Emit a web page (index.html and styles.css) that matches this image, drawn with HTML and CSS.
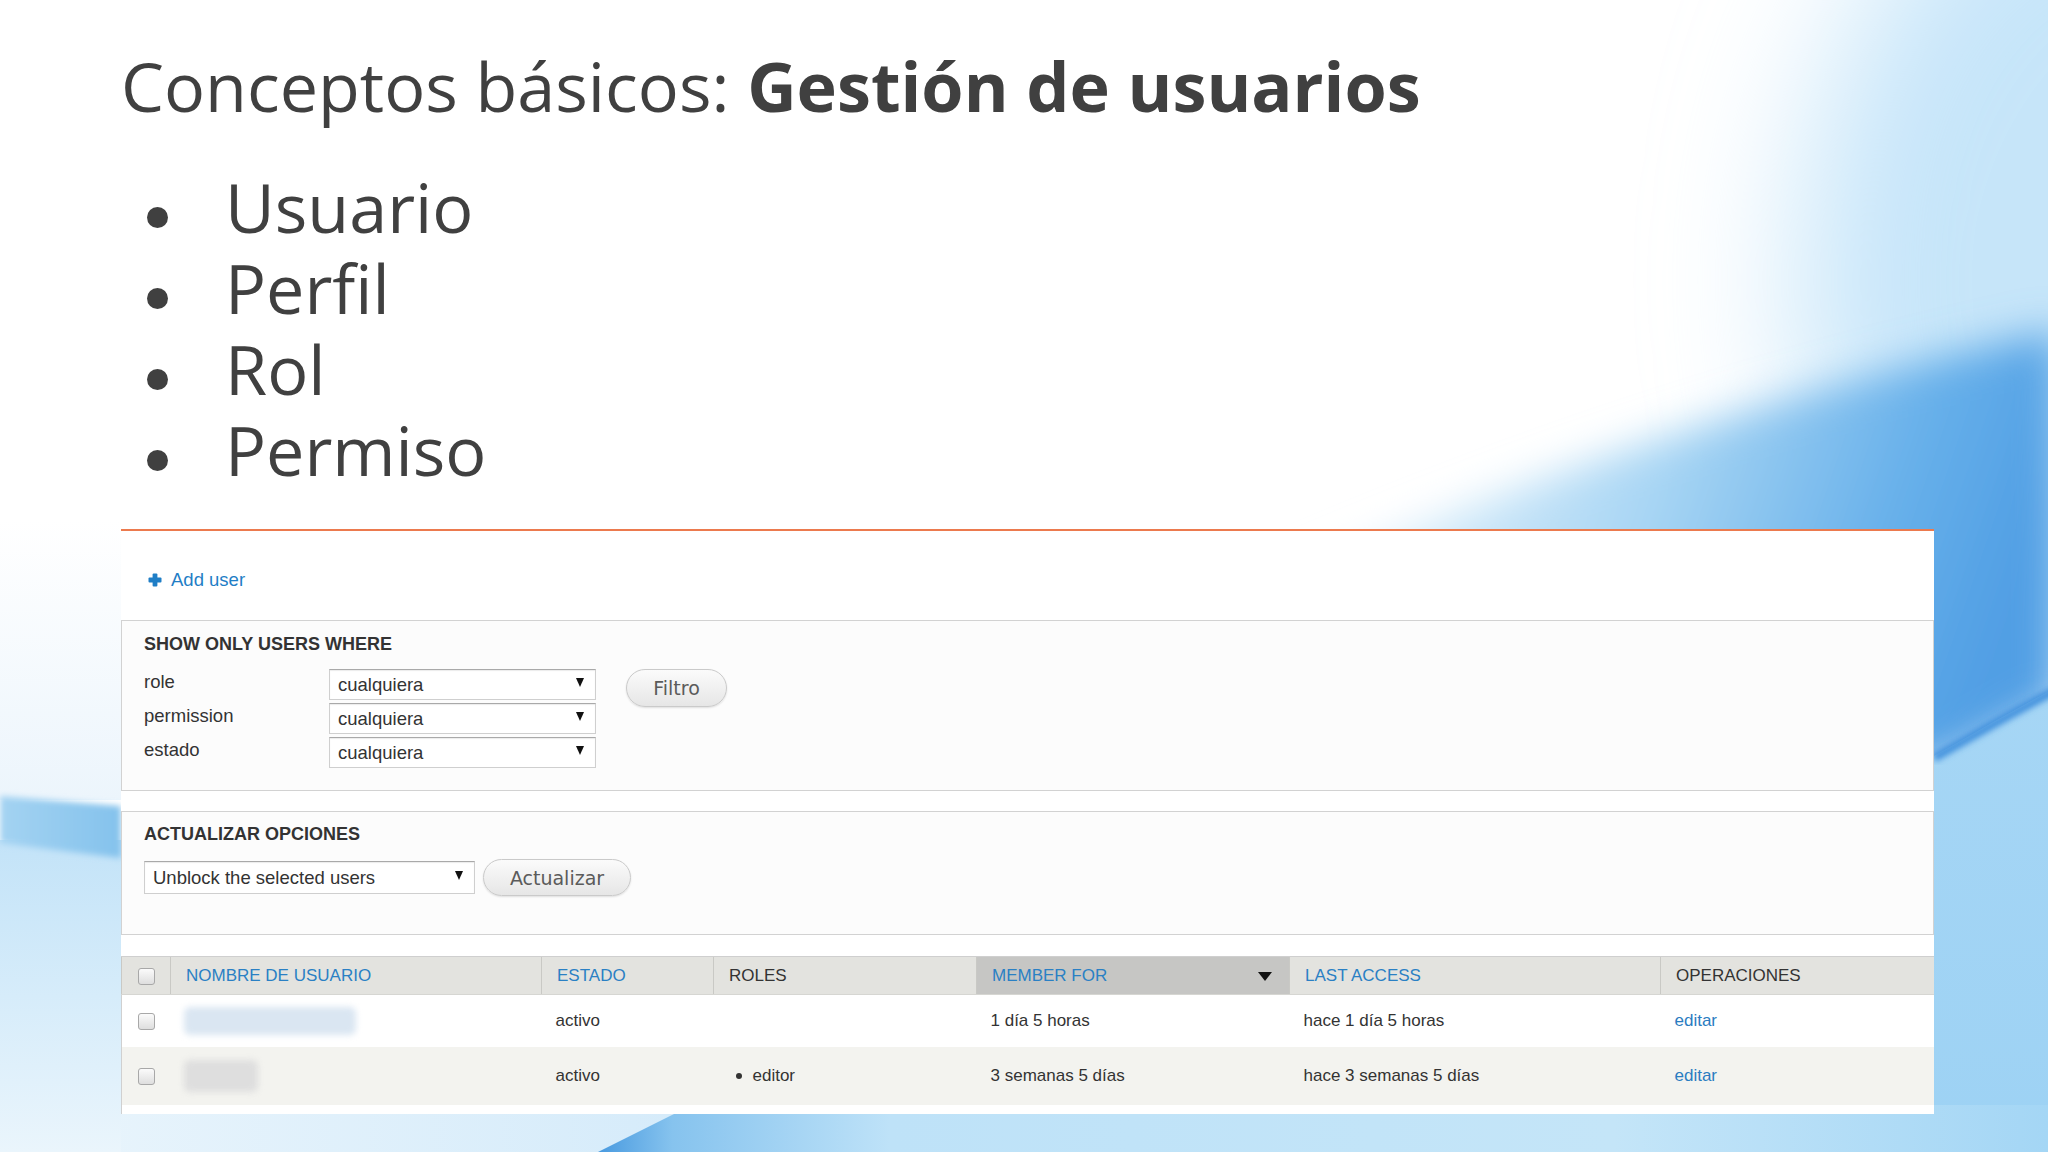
FILE: index.html
```html
<!DOCTYPE html>
<html lang="es">
<head>
    <meta charset="UTF-8">
    <meta name="viewport" content="width=device-width, initial-scale=1.0">
    <title>Conceptos básicos: Gestión de usuarios</title>
    <link rel="stylesheet" href="styles.css">
</head>
<body>
    <div class="slide">
        <svg class="backdrop" viewBox="0 0 2048 1152" preserveAspectRatio="none" aria-hidden="true">
            <defs>
                <linearGradient id="band" gradientUnits="userSpaceOnUse" x1="1350" y1="430" x2="1990" y2="650">
                    <stop offset="0" stop-color="#eef7fd"/>
                    <stop offset="0.45" stop-color="#a9d6f4"/>
                    <stop offset="0.8" stop-color="#67b0ea"/>
                    <stop offset="1" stop-color="#519fe4"/>
                </linearGradient>
                <linearGradient id="under" x1="0" y1="0" x2="0" y2="1">
                    <stop offset="0" stop-color="#a6d6f5"/>
                    <stop offset="1" stop-color="#9dd2f4"/>
                </linearGradient>
                <linearGradient id="floor" x1="0" y1="0" x2="1" y2="0">
                    <stop offset="0" stop-color="#eaf5fc"/>
                    <stop offset="1" stop-color="#d5ebfa"/>
                </linearGradient>
                <linearGradient id="streak" gradientUnits="userSpaceOnUse" x1="600" y1="0" x2="2048" y2="0">
                    <stop offset="0" stop-color="#4a9be0"/>
                    <stop offset="0.05" stop-color="#86c3ee"/>
                    <stop offset="0.2" stop-color="#bee2f8"/>
                    <stop offset="0.7" stop-color="#c4e5f8"/>
                    <stop offset="1" stop-color="#a4d6f5"/>
                </linearGradient>
                <linearGradient id="leftband" x1="0" y1="0" x2="1" y2="0">
                    <stop offset="0" stop-color="#a4d3f2"/>
                    <stop offset="1" stop-color="#84c2ec"/>
                </linearGradient>
                <linearGradient id="leftwash" x1="0" y1="0" x2="0" y2="1">
                    <stop offset="0" stop-color="#c3e3f8"/>
                    <stop offset="0.5" stop-color="#d6ecfa"/>
                    <stop offset="1" stop-color="#eaf5fc"/>
                </linearGradient>
                <linearGradient id="lefttop" x1="0" y1="0" x2="0" y2="1">
                    <stop offset="0" stop-color="#ffffff"/>
                    <stop offset="1" stop-color="#ecf5fc"/>
                </linearGradient>
                <filter id="haze" x="-50%" y="-50%" width="200%" height="200%"><feGaussianBlur stdDeviation="70"/></filter>
                <filter id="soft" x="-20%" y="-20%" width="140%" height="140%"><feGaussianBlur stdDeviation="20"/></filter>
                <filter id="edge"><feGaussianBlur stdDeviation="3"/></filter>
            </defs>
            <rect width="2048" height="1152" fill="#ffffff"/>
            <ellipse cx="2120" cy="280" rx="320" ry="440" fill="#c6e5f9" filter="url(#haze)"/>
            <path d="M1200 620 C1500 480 1800 385 2060 330 L2060 700 L1934 770 L1200 770 Z" fill="url(#band)" filter="url(#soft)"/>
            <path d="M1934 756 C1975 733 2010 712 2048 692 L2048 1152 L1934 1152 Z" fill="url(#under)"/>
            <path d="M1934 758 C1975 735 2010 714 2060 688" stroke="#3a8cdb" stroke-width="8" fill="none" filter="url(#edge)"/>
            <rect x="0" y="1105" width="700" height="47" fill="url(#floor)"/>
            <path d="M692 1105 L2048 1105 L2048 1152 L598 1152 Z" fill="url(#streak)"/>
            <rect x="0" y="520" width="121" height="280" fill="url(#lefttop)"/>
            <rect x="0" y="840" width="121" height="312" fill="url(#leftwash)"/>
            <path d="M0 796 L121 806 L121 858 L0 843 Z" fill="url(#leftband)" filter="url(#edge)"/>
        </svg>

        <div class="content">
            <h1 class="title">Conceptos básicos: <strong>Gestión de usuarios</strong></h1>

            <ul class="points">
                <li><span class="dot"></span>Usuario</li>
                <li><span class="dot"></span>Perfil</li>
                <li><span class="dot"></span>Rol</li>
                <li><span class="dot"></span>Permiso</li>
            </ul>

            <div class="panel">
                <div class="add-user">
                    <svg class="plus" viewBox="0 0 14 14" aria-hidden="true">
                        <rect x="4.6" y="0.5" width="4.8" height="13" rx="1" fill="#1f7ec6"/>
                        <rect x="0.5" y="4.6" width="13" height="4.8" rx="1" fill="#1f7ec6"/>
                    </svg>
                    <span>Add user</span>
                </div>

                <div class="box box-filter">
                    <div class="legend">SHOW ONLY USERS WHERE</div>
                    <div class="filters">
                        <div class="filter-rows">
                            <label>role</label>
                            <div class="select"><span>cualquiera</span><i class="caret"></i></div>
                            <label>permission</label>
                            <div class="select"><span>cualquiera</span><i class="caret"></i></div>
                            <label>estado</label>
                            <div class="select"><span>cualquiera</span><i class="caret"></i></div>
                        </div>
                        <button class="btn btn-filter">Filtro</button>
                    </div>
                </div>

                <div class="box box-update">
                    <div class="legend">ACTUALIZAR OPCIONES</div>
                    <div class="update-row">
                        <div class="select select-wide"><span>Unblock the selected users</span><i class="caret"></i></div>
                        <button class="btn btn-update">Actualizar</button>
                    </div>
                </div>

                <table class="users">
                    <colgroup>
                        <col style="width:49px">
                        <col style="width:371px">
                        <col style="width:172px">
                        <col style="width:263px">
                        <col style="width:313px">
                        <col style="width:371px">
                        <col style="width:274px">
                    </colgroup>
                    <thead>
                        <tr>
                            <th class="check"><span class="box-check"></span></th>
                            <th class="link">NOMBRE DE USUARIO</th>
                            <th class="link">ESTADO</th>
                            <th>ROLES</th>
                            <th class="link sorted">MEMBER FOR <i class="sort-arrow"></i></th>
                            <th class="link">LAST ACCESS</th>
                            <th>OPERACIONES</th>
                        </tr>
                    </thead>
                    <tbody>
                        <tr class="row-a">
                            <td class="check"><span class="box-check"></span></td>
                            <td><span class="blurred blurred-long"></span></td>
                            <td>activo</td>
                            <td></td>
                            <td>1 día 5 horas</td>
                            <td>hace 1 día 5 horas</td>
                            <td><a class="op">editar</a></td>
                        </tr>
                        <tr class="row-b">
                            <td class="check"><span class="box-check"></span></td>
                            <td><span class="blurred blurred-short"></span></td>
                            <td>activo</td>
                            <td><span class="role"><span class="role-dot"></span>editor</span></td>
                            <td>3 semanas 5 días</td>
                            <td>hace 3 semanas 5 días</td>
                            <td><a class="op">editar</a></td>
                        </tr>
                        <tr class="row-a">
                            <td class="check"></td>
                            <td></td>
                            <td></td>
                            <td></td>
                            <td></td>
                            <td></td>
                            <td></td>
                        </tr>
                    </tbody>
                </table>
            </div>
        </div>
    </div>
</body>
</html>
```

FILE: styles.css
```css
* {
    box-sizing: border-box;
}

body {
    margin: 0;
    width: 2048px;
    height: 1152px;
    overflow: hidden;
    background: #fff;
    font-family: "Open Sans", "DejaVu Sans", sans-serif;
}

.slide {
    position: relative;
    width: 2048px;
    height: 1152px;
    overflow: hidden;
}

.backdrop {
    position: absolute;
    left: 0;
    top: 0;
    width: 100%;
    height: 100%;
}

.content {
    position: relative;
    padding: 41px 0 0 121px;
}

/* slide heading + bullets */

.title {
    margin: 0;
    font-size: 68.3px;
    line-height: 90px;
    font-weight: 400;
    color: #404040;
    white-space: nowrap;
}

.title strong {
    font-weight: 700;
}

.points {
    list-style: none;
    margin: 35px 0 0;
    padding: 0;
}

.points li {
    display: flex;
    height: 81px;
    font-size: 68.3px;
    line-height: 81px;
    color: #404040;
}

.dot {
    flex: none;
    width: 21px;
    height: 21px;
    margin: 41px 57px 0 26px;
    border-radius: 50%;
    background: #404040;
}

/* admin screenshot */

.panel {
    width: 1813px;
    height: 585px;
    margin-top: 39px;
    overflow: hidden;
    background: #fff;
    border-top: 2px solid #ec7a4e;
    font-family: "Liberation Sans", Arial, sans-serif;
    color: #333;
}

.add-user {
    display: flex;
    align-items: flex-start;
    gap: 9px;
    height: 89px;
    padding: 37px 0 0 27px;
    font-size: 18.5px;
    line-height: 24px;
    color: #1f7ec6;
}

.plus {
    width: 14px;
    height: 14px;
    margin-top: 5px;
}

.box {
    border: 1px solid #d2d2d2;
    background: #fcfcfc;
    padding: 11px 22px 22px;
}

.box-update {
    margin-top: 20px;
    padding: 10px 22px 38px;
}

.legend {
    font-size: 18px;
    line-height: 24px;
    font-weight: bold;
    color: #333;
    margin-bottom: 13px;
}

.filters {
    display: flex;
    align-items: flex-start;
}

.filter-rows {
    display: grid;
    grid-template-columns: 185px 267px;
    row-gap: 3px;
}

.filter-rows label {
    font-size: 18.5px;
    line-height: 26px;
    color: #333;
}

.select {
    display: flex;
    align-items: center;
    justify-content: space-between;
    height: 31px;
    padding: 0 11px 0 8px;
    background: #fff;
    border: 1px solid #cfcfcf;
    border-top-color: #a9a9a9;
    box-shadow: inset 0 1px 1px rgba(0,0,0,0.08);
    font-size: 18.5px;
    color: #333;
}

.select-wide {
    width: 331px;
    height: 33px;
}

.caret {
    width: 0;
    height: 0;
    border-left: 4px solid transparent;
    border-right: 4px solid transparent;
    border-top: 9px solid #111;
    margin-top: -4px;
}

.btn {
    height: 38px;
    padding: 0;
    border: 1px solid #cacaca;
    border-radius: 19px;
    background: linear-gradient(#fbfbfb, #e6e6e6);
    box-shadow: 0 1px 2px rgba(0,0,0,0.12);
    font-family: "DejaVu Sans", sans-serif;
    font-size: 19px;
    color: #5b5b5b;
}

.btn-filter {
    width: 101px;
    margin-left: 30px;
}

.update-row {
    display: flex;
    align-items: center;
    gap: 8px;
}

.btn-update {
    width: 148px;
    height: 37px;
}

/* user list */

.users {
    width: 1813px;
    margin-top: 21px;
    border-collapse: collapse;
    table-layout: fixed;
    font-size: 17px;
    border-left: 1px solid #d0d0d0;
}

.users th {
    height: 38px;
    padding: 0 15px;
    text-align: left;
    font-weight: normal;
    color: #333;
    background: #e3e3df;
    border-top: 1px solid #cfcfcf;
    border-bottom: 1px solid #d6d6d2;
    border-left: 1px solid #c9c9c5;
}

.users th.link {
    color: #2a80c4;
}

.users th.sorted {
    background: #c6c6c4;
    position: relative;
}

.sort-arrow {
    position: absolute;
    right: 17px;
    top: 15px;
    width: 0;
    height: 0;
    border-left: 7px solid transparent;
    border-right: 7px solid transparent;
    border-top: 9px solid #111;
}

.users td {
    padding: 0 14px;
    color: #333;
}

.users .check {
    padding: 0;
    text-align: center;
}

.row-a td {
    height: 52px;
    background: #fff;
}

.row-b td {
    height: 58px;
    background: #f3f3ef;
}

.box-check {
    display: inline-block;
    width: 17px;
    height: 17px;
    vertical-align: middle;
    border: 1px solid #a8a8a8;
    border-radius: 3px;
    background: linear-gradient(#fbfbfb, #dedede);
}

.blurred {
    display: block;
    margin-left: -1px;
    border-radius: 6px;
    filter: blur(3px);
}

.blurred-long {
    width: 172px;
    height: 28px;
    background: #dae6f2;
}

.blurred-short {
    width: 74px;
    height: 32px;
    background: #dedede;
}

.role {
    display: flex;
    align-items: center;
    padding-left: 8px;
}

.role-dot {
    width: 6px;
    height: 6px;
    margin-right: 11px;
    border-radius: 50%;
    background: #333;
}

.op {
    color: #2a7cc1;
}
```
